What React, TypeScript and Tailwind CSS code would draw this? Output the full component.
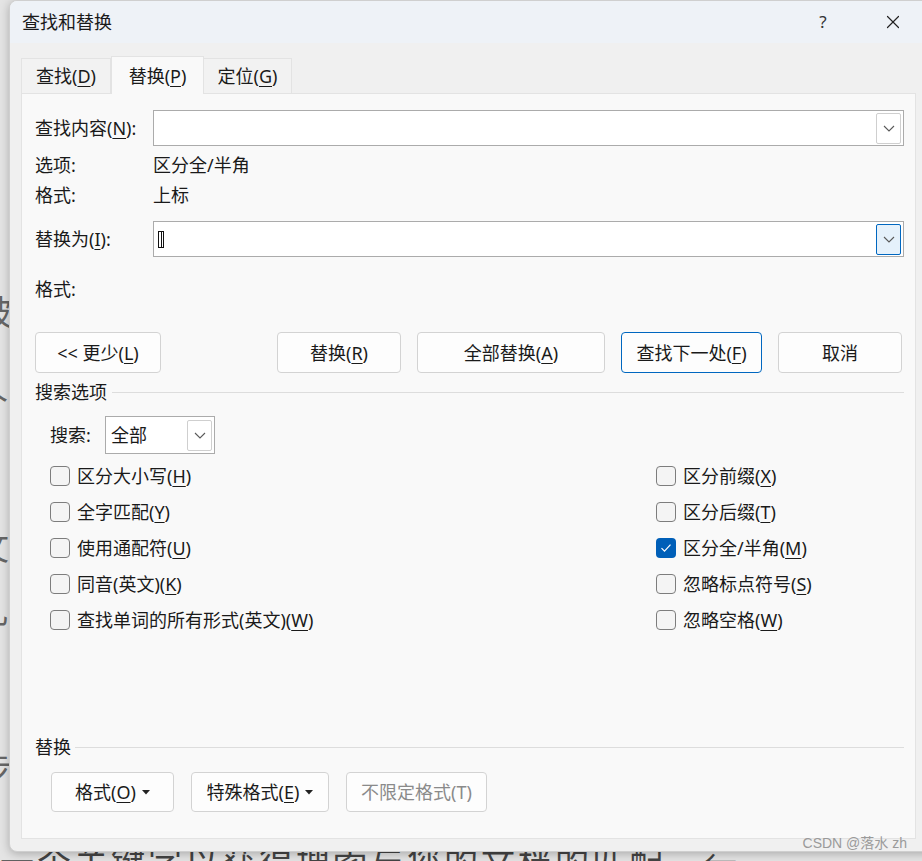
import React from "react";
import { X } from "lucide-react";

const font = "font-['Noto_Sans','Noto_Sans_CJK_SC',sans-serif]";

// mnemonic letter, underlined like a Windows access key
function M({ k }: { k: string }) {
  return <span className="underline underline-offset-[3px] decoration-1">{k}</span>;
}

function Chevron() {
  return (
    <svg width="12" height="7" viewBox="0 0 12 7" fill="none">
      <path d="M1 1l5 5 5-5" stroke="#5a5a5a" strokeWidth="1.1" />
    </svg>
  );
}

function DropBtn({ active }: { active?: boolean }) {
  return (
    <div
      className={`w-[25px] h-[31px] rounded-[2px] border flex items-center justify-center ${
        active ? "border-[#0067c0] bg-[#e5f1fb]" : "border-[#cfcfcf] bg-white"
      }`}
    >
      <Chevron />
    </div>
  );
}

function Btn({
  w,
  primary,
  disabled,
  children,
}: {
  w: string;
  primary?: boolean;
  disabled?: boolean;
  children: React.ReactNode;
}) {
  return (
    <div
      className={`${w} h-full rounded-[4px] border bg-[#fdfdfd] flex items-center justify-center ${
        primary ? "border-[#0067c0]" : "border-[#d3d3d3]"
      } ${disabled ? "text-[#8a8a8a]" : "text-[#1a1a1a]"}`}
    >
      {children}
    </div>
  );
}

function Check({ checked, children }: { checked?: boolean; children: React.ReactNode }) {
  return (
    <div className="h-9 flex items-center gap-[7px]">
      {checked ? (
        <span className="w-[20px] h-[20px] rounded-[4px] bg-[#005fb8] flex items-center justify-center">
          <svg width="12" height="10" viewBox="0 0 12 10" fill="none">
            <path d="M1.5 5.2l3 3 6-6.6" stroke="white" strokeWidth="1.2" />
          </svg>
        </span>
      ) : (
        <span className="w-[20px] h-[20px] rounded-[4px] border border-[#7d7d7d] bg-[#f4f4f4]" />
      )}
      <span>{children}</span>
    </div>
  );
}

function Tri() {
  return (
    <svg width="8" height="5" viewBox="0 0 8 5" className="ml-[6px]">
      <path d="M0 0h8L4 4.5z" fill="#222" />
    </svg>
  );
}

export default function App() {
  return (
    <div className={`relative w-[922px] h-[861px] overflow-hidden bg-[#e4e4e4] ${font} text-[18px] leading-[24px] text-[#1a1a1a]`}>
      {/* document behind the dialog */}
      <span className="absolute left-[-22px] top-[300px] text-[34px] text-[#666]">被</span>
      <span className="absolute left-[-26px] top-[390px] text-[34px] text-[#666]">个</span>
      <span className="absolute left-[-25px] top-[535px] text-[34px] text-[#666]">文</span>
      <span className="absolute left-[-26px] top-[598px] text-[34px] text-[#666]">几</span>
      <span className="absolute left-[-22px] top-[757px] text-[34px] text-[#666]">步</span>
      <div className="absolute left-[0px] top-[842px] text-[34px] leading-[40px] tracking-[3px] text-[#444] whitespace-nowrap">
        一个关键字以获得搜索与您的文档的匹配。←
      </div>

      {/* dialog window */}
      <div className="absolute left-[9px] top-0 w-[930px] h-[852px] rounded-[8px] bg-[#f0f0f0] border border-[#cfcfcf] shadow-[0_2px_10px_rgba(0,0,0,0.25)] flex flex-col overflow-hidden">
        {/* title bar */}
        <div className="h-[42px] shrink-0 bg-[#eef2f7] flex items-center pl-[12px]">
          <span className="flex-1">查找和替换</span>
          <span className="w-[40px] text-center text-[17px] text-[#333] mr-[39px]">?</span>
          <X className="w-[22px] h-[22px] text-[#222] mr-[34px]" strokeWidth={1.3} />
        </div>

        {/* tabs */}
        <div className="ml-[11px] mt-[12px] flex items-end h-[38px]">
          <div className="w-[90px] h-[35px] border border-[#e3e3e3] border-b-0 bg-[#f2f2f2] flex items-center justify-center">
            查找(<M k="D" />)
          </div>
          <div className="w-[93px] h-[38px] border border-[#e3e3e3] border-b-0 bg-[#f9f9f9] flex items-center justify-center -mb-px relative z-10">
            替换(<M k="P" />)
          </div>
          <div className="w-[88px] h-[35px] border border-[#e3e3e3] border-b-0 border-l-0 bg-[#f2f2f2] flex items-center justify-center">
            定位(<M k="G" />)
          </div>
        </div>

        {/* tab panel */}
        <div className="ml-[11px] w-[895px] h-[746px] border border-[#e3e3e3] bg-[#f9f9f9] flex flex-col pl-[13px] pr-[11px]">
          <div className="mt-[16px] flex items-center h-[36px]">
            <span className="w-[118px]">
              查找内容(<M k="N" />):
            </span>
            <div className="flex-1 h-full border border-[#ababab] bg-white flex items-center justify-end pr-[2px]">
              <DropBtn />
            </div>
          </div>
          <div className="flex items-center h-[30px] mt-[4px]">
            <span className="w-[118px]">选项:</span>
            <span>区分全/半角</span>
          </div>
          <div className="flex items-center h-[30px]">
            <span className="w-[118px]">格式:</span>
            <span>上标</span>
          </div>
          <div className="mt-[11px] flex items-center h-[36px]">
            <span className="w-[118px]">
              替换为(<M k="I" />):
            </span>
            <div className="flex-1 h-full border border-[#ababab] bg-white flex items-center pl-[4px] pr-[2px]">
              <span className="w-[6px] h-[17px] border border-[#111] flex justify-center">
                <span className="w-px h-full bg-[#111]" />
              </span>
              <span className="flex-1" />
              <DropBtn active />
            </div>
          </div>
          <div className="flex items-center h-[30px] mt-[17px]">
            <span>格式:</span>
          </div>

          {/* action buttons */}
          <div className="mt-[28px] h-[41px] flex">
            <Btn w="w-[126px]">
              &lt;&lt; 更少(<M k="L" />)
            </Btn>
            <span className="w-[116px]" />
            <Btn w="w-[124px]">
              替换(<M k="R" />)
            </Btn>
            <span className="w-[16px]" />
            <Btn w="w-[188px]">
              全部替换(<M k="A" />)
            </Btn>
            <span className="w-[16px]" />
            <Btn w="w-[141px]" primary>
              查找下一处(<M k="F" />)
            </Btn>
            <span className="w-[16px]" />
            <Btn w="w-[124px]">取消</Btn>
          </div>

          {/* search options */}
          <div className="mt-[7px] h-[24px] flex items-center gap-[5px]">
            <span>搜索选项</span>
            <span className="flex-1 h-px bg-[#dddddd]" />
          </div>
          <div className="mt-[12px] h-[38px] flex items-center pl-[15px]">
            <span className="w-[55px]">搜索:</span>
            <div className="w-[110px] h-full border border-[#ababab] bg-white flex items-center pl-[5px] pr-[2px]">
              <span className="flex-1">全部</span>
              <DropBtn />
            </div>
          </div>

          <div className="mt-[4px] grid grid-cols-[606px_1fr] pl-[15px]">
            <div className="flex flex-col">
              <Check>
                区分大小写(<M k="H" />)
              </Check>
              <Check>
                全字匹配(<M k="Y" />)
              </Check>
              <Check>
                使用通配符(<M k="U" />)
              </Check>
              <Check>
                同音(英文)(<M k="K" />)
              </Check>
              <Check>
                查找单词的所有形式(英文)(<M k="W" />)
              </Check>
            </div>
            <div className="flex flex-col">
              <Check>
                区分前缀(<M k="X" />)
              </Check>
              <Check>
                区分后缀(<M k="T" />)
              </Check>
              <Check checked>
                区分全/半角(<M k="M" />)
              </Check>
              <Check>
                忽略标点符号(<M k="S" />)
              </Check>
              <Check>
                忽略空格(<M k="W" />)
              </Check>
            </div>
          </div>

          <div className="flex-1" />

          {/* replace section */}
          <div className="h-[24px] flex items-center gap-[4px]">
            <span>替换</span>
            <span className="flex-1 h-px bg-[#dddddd]" />
          </div>
          <div className="mt-[13px] h-[40px] flex pl-[16px] gap-[17px]">
            <Btn w="w-[123px]">
              格式(<M k="O" />)
              <Tri />
            </Btn>
            <Btn w="w-[138px]">
              特殊格式(<M k="E" />)
              <Tri />
            </Btn>
            <Btn w="w-[141px]" disabled>
              不限定格式(T)
            </Btn>
          </div>
          <div className="h-[26px]" />
        </div>
      </div>

      {/* watermark */}
      <span className="absolute right-[15px] top-[834px] text-[14px] leading-[18px] text-[#9a9a9a] font-['Liberation_Sans','Noto_Sans_CJK_SC',sans-serif]">
        CSDN @落水 zh
      </span>
    </div>
  );
}
